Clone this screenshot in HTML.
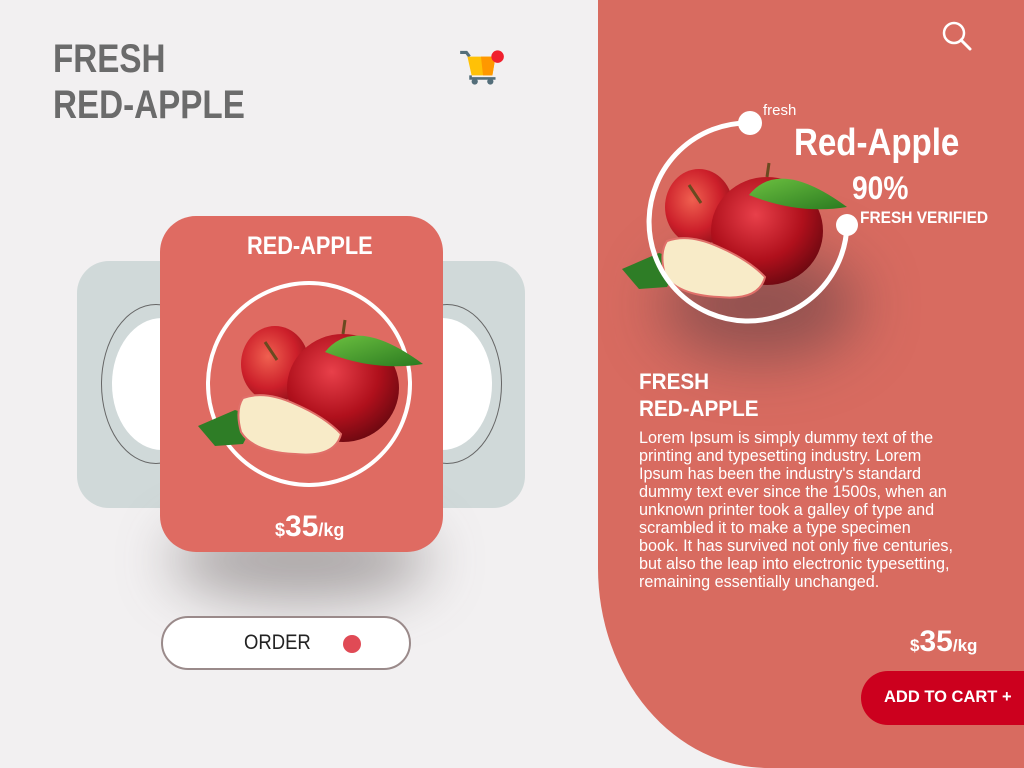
<!DOCTYPE html>
<html><head><meta charset="utf-8"><style>
*{margin:0;padding:0;box-sizing:border-box}
body{width:1024px;height:768px;overflow:hidden;background:#f2f0f1;position:relative;font-family:"Liberation Sans",sans-serif}
.n{font-family:"Liberation Sans",sans-serif;font-weight:bold;transform-origin:left top;white-space:nowrap}
.abs{position:absolute}
#right{position:absolute;left:598px;top:0;width:426px;height:768px;background:#d86b60;border-bottom-left-radius:170px 200px}
</style></head><body>
<div class="abs n" style="left:53px;top:36px;font-size:40px;line-height:46px;color:#6b6b6b;transform:scaleX(.83)">FRESH<br>RED-APPLE</div>

<svg class="abs" style="left:456px;top:46px" width="52" height="42" viewBox="0 0 50 40">
<path d="M4 6 H10 L13 10" stroke="#546e7a" stroke-width="3" fill="none"/>
<path d="M11 10 H38 L35 28 H15 Z" fill="#ffc107"/>
<path d="M24 10 H38 L35 28 H26 Z" fill="#ff9800"/>
<path d="M14 28 L14 31 H38" stroke="#546e7a" stroke-width="2.5" fill="none"/>
<circle cx="18" cy="34" r="3" fill="#546e7a"/><circle cx="33" cy="34" r="3" fill="#546e7a"/>
<circle cx="40" cy="10" r="6" fill="#f0202e"/>
</svg>

<div class="abs" style="left:77px;top:261px;width:448px;height:247px;background:#d0d9d9;border-radius:32px"></div>
<div class="abs" style="left:101px;top:304px;width:110px;height:160px;border:1px solid #666;border-radius:50%"></div>
<div class="abs" style="left:112px;top:318px;width:100px;height:132px;background:#fff;border-radius:50%"></div>
<div class="abs" style="left:392px;top:304px;width:110px;height:160px;border:1px solid #666;border-radius:50%"></div>
<div class="abs" style="left:392px;top:318px;width:100px;height:132px;background:#fff;border-radius:50%"></div>

<div class="abs" style="left:170px;top:520px;width:260px;height:80px;border-radius:50%;background:rgba(80,70,70,.45);filter:blur(28px)"></div>
<div class="abs" style="left:160px;top:216px;width:283px;height:336px;background:#df6b62;border-radius:36px"></div>
<div class="abs n" style="left:247px;top:232px;color:#fff;font-size:25px;transform:scaleX(.87)">RED-APPLE</div>
<div class="abs" style="left:206px;top:281px;width:206px;height:206px;border:4px solid #fff;border-radius:50%"></div>
<div class="abs n" style="left:275px;top:510px;color:#fff;font-size:18px">$<span style="font-size:30px">35</span>/kg</div>

<div class="abs" style="left:161px;top:616px;width:250px;height:54px;border:2px solid #9a8a8a;border-radius:27px;background:#fff"></div>
<div class="abs" style="left:244px;top:631px;font-size:21px;color:#222;transform:scaleX(.88);transform-origin:left top">ORDER</div>
<div class="abs" style="left:343px;top:635px;width:18px;height:18px;border-radius:50%;background:#e04a55"></div>

<div id="right"></div>
<div class="abs" style="left:660px;top:250px;width:200px;height:110px;border-radius:50%;background:rgba(60,50,60,.45);filter:blur(30px)"></div>

<svg class="abs" style="left:0;top:0" width="1024" height="768">
<defs>
<radialGradient id="ra" cx="40%" cy="35%" r="70%"><stop offset="0" stop-color="#e8404a"/><stop offset=".6" stop-color="#b0101c"/><stop offset="1" stop-color="#6a0810"/></radialGradient>
<radialGradient id="rb" cx="40%" cy="40%" r="70%"><stop offset="0" stop-color="#f06050"/><stop offset=".6" stop-color="#cc1f2a"/><stop offset="1" stop-color="#8a1018"/></radialGradient>
<linearGradient id="lf" x1="0" y1="0" x2="1" y2="1"><stop offset="0" stop-color="#6cc040"/><stop offset="1" stop-color="#2a7a20"/></linearGradient>
<g id="ap">
<path d="M3 104 L40 88 L62 95 L48 122 L20 124 Z" fill="#2e7d26"/>
<ellipse cx="80" cy="42" rx="34" ry="38" fill="url(#rb)"/>
<path d="M70 20 L82 38" stroke="#6a4a20" stroke-width="3"/>
<ellipse cx="148" cy="66" rx="56" ry="54" fill="url(#ra)"/>
<path d="M148 12 L150 -2" stroke="#6a4a20" stroke-width="3"/>
<path d="M130 30 Q160 -8 228 42 Q180 50 130 30 Z" fill="url(#lf)"/>
<path d="M48 76 Q70 68 100 82 Q130 95 146 112 Q140 136 100 132 Q58 130 46 110 Q40 88 48 76 Z" fill="#f8ebc8" stroke="#e0706a" stroke-width="2"/>
</g>
</defs>
<use href="#ap" transform="translate(195,322)"/>
<use href="#ap" transform="translate(619,165)"/>
<path d="M750 123 A99 99 0 1 0 847 225" fill="none" stroke="#fff" stroke-width="5"/>
<circle cx="750" cy="123" r="12" fill="#fff"/>
<circle cx="847" cy="225" r="11" fill="#fff"/>
<circle cx="954" cy="33" r="10" fill="none" stroke="#fff" stroke-width="2.5"/>
<path d="M961 40 L970 49" stroke="#fff" stroke-width="3" stroke-linecap="round"/>
</svg>

<div class="abs" style="left:763px;top:102px;color:#fff;font-size:15px">fresh</div>
<div class="abs n" style="left:794px;top:122px;color:#fff;font-size:38px;transform:scaleX(.87)">Red-Apple</div>
<div class="abs n" style="left:852px;top:170px;color:#fff;font-size:32px;transform:scaleX(.88)">90%</div>
<div class="abs n" style="left:860px;top:208px;color:#fff;font-size:17px;transform:scaleX(.91)">FRESH VERIFIED</div>

<div class="abs n" style="left:639px;top:368px;color:#fff;font-size:22px;line-height:27px;transform:scaleX(.94)">FRESH<br>RED-APPLE</div>
<div class="abs" style="left:639px;top:429px;color:#fff;font-size:16.2px;line-height:18px;white-space:nowrap">Lorem Ipsum is simply dummy text of the<br>printing and typesetting industry. Lorem<br>Ipsum has been the industry's standard<br>dummy text ever since the 1500s, when an<br>unknown printer took a galley of type and<br>scrambled it to make a type specimen<br>book. It has survived not only five centuries,<br>but also the leap into electronic typesetting,<br>remaining essentially unchanged.</div>

<div class="abs n" style="left:910px;top:625px;color:#fff;font-size:17px">$<span style="font-size:30px">35</span>/kg</div>
<div class="abs" style="left:861px;top:671px;width:170px;height:54px;background:#cc001e;border-radius:27px 0 0 27px"></div>
<div class="abs" style="left:884px;top:688px;color:#fff;font-size:16.5px;font-weight:bold">ADD TO CART +</div>
</body></html>
